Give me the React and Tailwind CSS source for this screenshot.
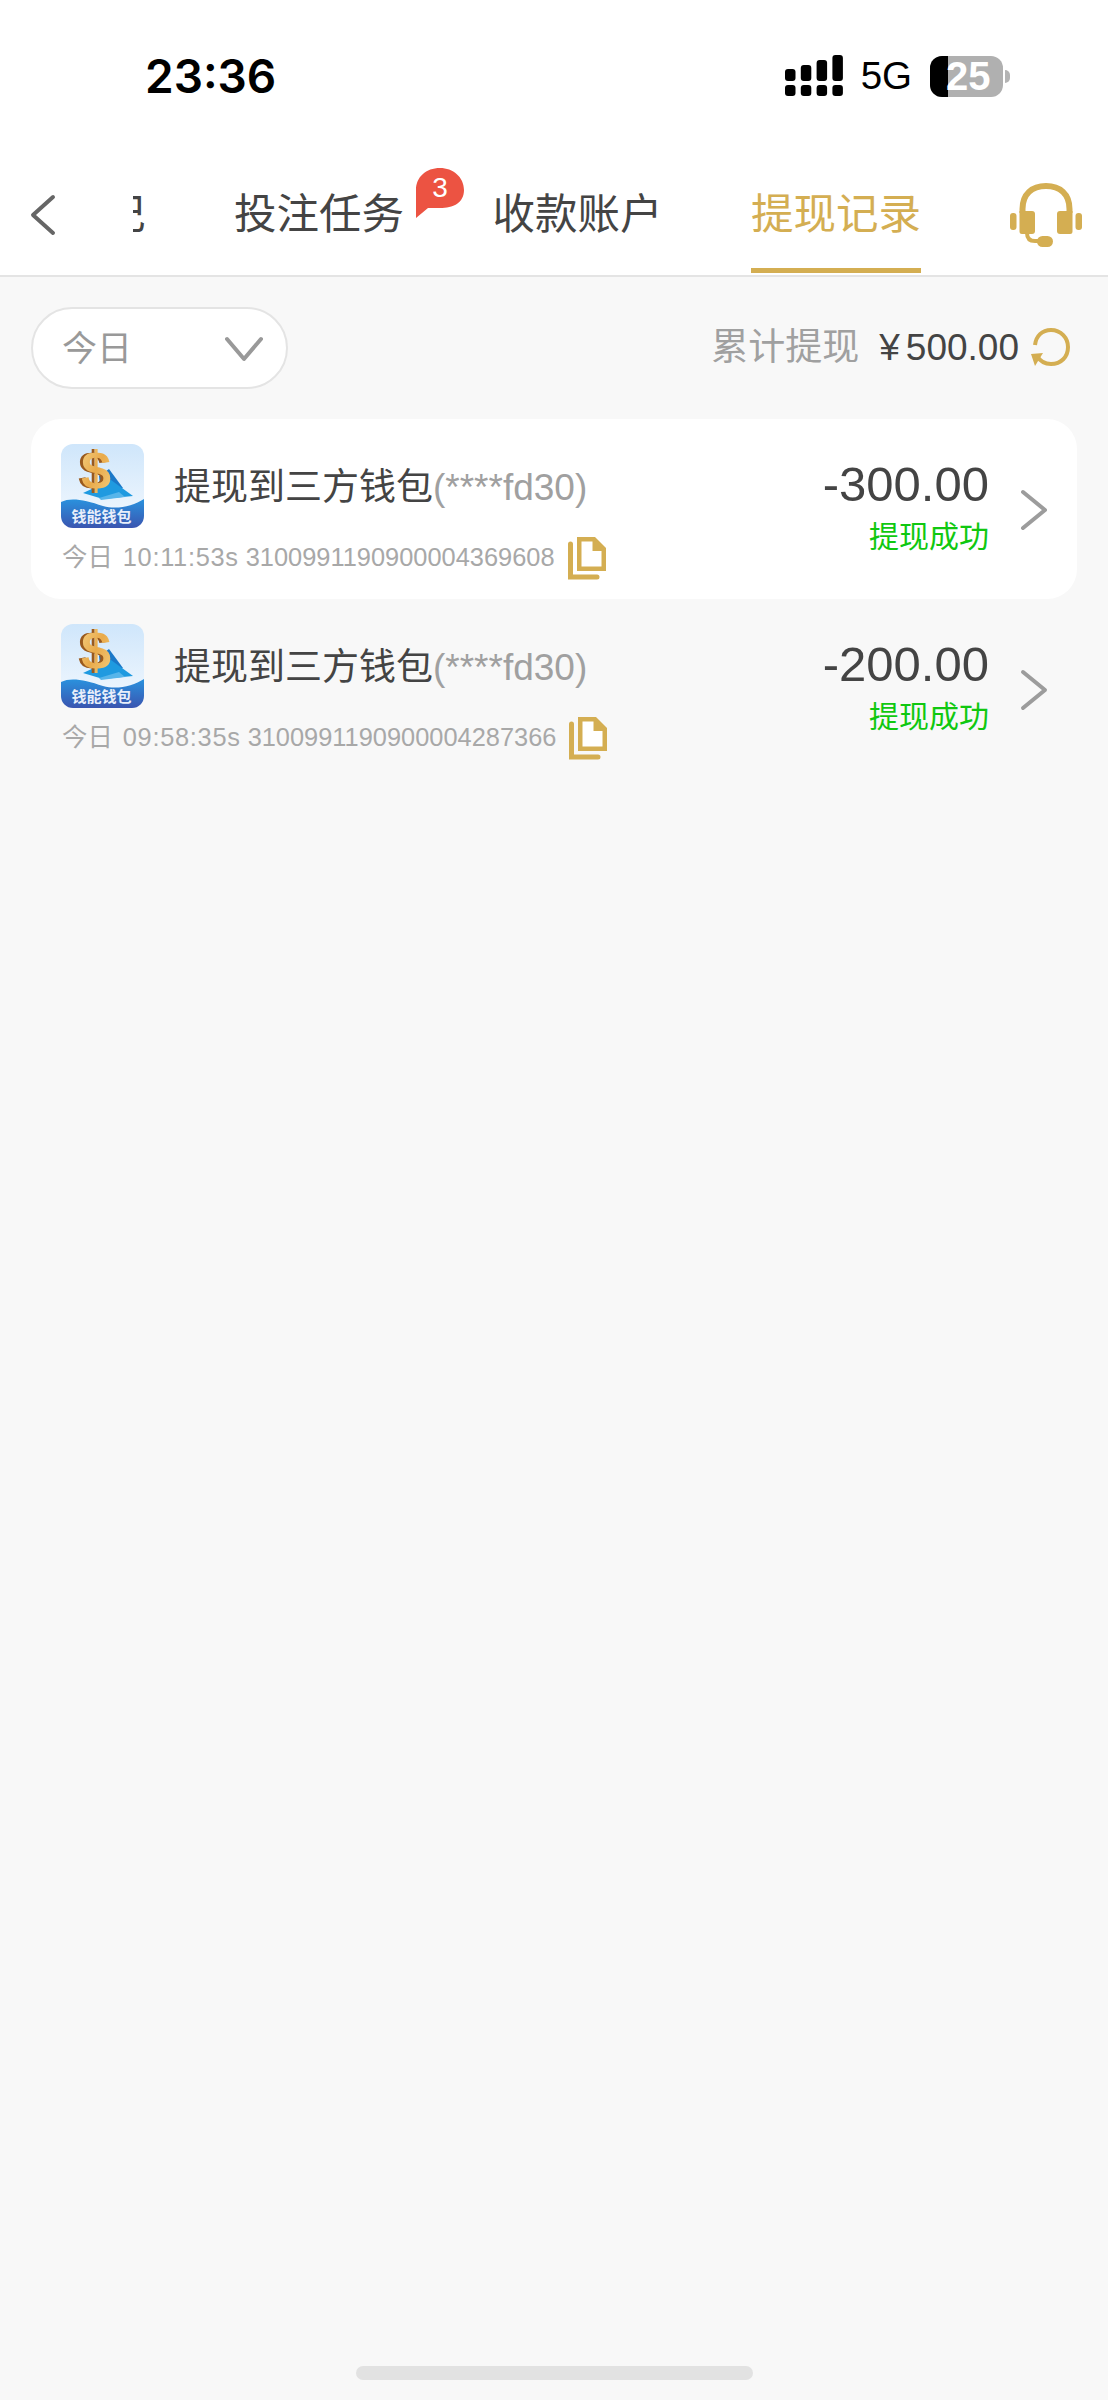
import React from 'react';

const records = [
  { time: '10:11:53s', no: '3100991190900004369608', amount: '-300.00', active: true },
  { time: '09:58:35s', no: '3100991190900004287366', amount: '-200.00', active: false },
];

function Signal() {
  const tops = [14, 10, 5, 0];
  return (
    <svg width="58" height="42" viewBox="0 0 58 42">
      {tops.map((t, i) => (
        <g key={i} fill="#000">
          <rect x={i * 15.8} y={t} width="10.5" height={26 - t} rx="3" />
          <rect x={i * 15.8} y="30" width="10.5" height="11" rx="3" />
        </g>
      ))}
    </svg>
  );
}

function Battery() {
  return (
    <div className="flex items-center gap-[2px]">
      <div className="relative flex h-[41px] w-[73px] overflow-hidden rounded-[12px] bg-[#b0b0b0]">
        <div className="h-full w-[18px] bg-black"></div>
        <span className="absolute left-[16px] top-0 text-[40px] leading-[41px] font-bold text-white">25</span>
      </div>
      <div className="h-[13px] w-[5px] rounded-r-full bg-[#b4b4b4]"></div>
    </div>
  );
}

function Headset() {
  return (
    <svg width="72" height="64" viewBox="0 0 72 64" fill="#d4ae52">
      <path d="M12.5 30V26C12.5 11 22 3 36 3S59.5 11 59.5 26V30" fill="none" stroke="#d4ae52" strokeWidth="6" />
      <path d="M9.5 28H22C24 28 25 29 25 31V48C25 50 24 51 22 51H12C10 51 9.5 50 9.5 48Z" />
      <path d="M62.5 28H50C48 28 47 29 47 31V48C47 50 48 51 50 51H60C62 51 62.5 50 62.5 48Z" />
      <rect x="0" y="30" width="6.5" height="17" rx="3" />
      <rect x="65.5" y="30" width="6.5" height="17" rx="3" />
      <path d="M17 50C17 56 20 58 25 58H32" fill="none" stroke="#d4ae52" strokeWidth="4" />
      <rect x="27" y="53" width="16" height="11" rx="5.5" />
    </svg>
  );
}

function Refresh() {
  return (
    <svg width="42" height="42" viewBox="0 0 42 42" fill="none">
      <path d="M5 18C6 9 12 3 21 3C31 3 38 11 38 20C38 30 31 37 21 37C15 37 10 34 7 29" stroke="#d4ae52" strokeWidth="4" />
      <path d="M1 27L13 26L5 39Z" fill="#d4ae52" />
    </svg>
  );
}

function Copy() {
  return (
    <svg width="40" height="44" viewBox="0 0 40 44" fill="none" className="shrink-0">
      <path d="M9 1H27L38 12V35H9Z" fill="#d4ae52" />
      <path d="M13.5 5.5H24.5V15H33.5V30.5H13.5Z" fill="#fff" />
      <path d="M2.5 8V41H29" stroke="#d4ae52" strokeWidth="5" strokeLinecap="round" />
    </svg>
  );
}

function WalletLogo({ id }) {
  return (
    <svg width="83" height="84" viewBox="0 0 83 84" className="shrink-0">
      <defs>
        <linearGradient id={`sky${id}`} x1="0" y1="0" x2="0" y2="1">
          <stop offset="0" stopColor="#cfe6fb" />
          <stop offset="1" stopColor="#f4f9fe" />
        </linearGradient>
        <linearGradient id={`sea${id}`} x1="0" y1="0" x2="0" y2="1">
          <stop offset="0" stopColor="#2a92de" />
          <stop offset="1" stopColor="#3a55b0" />
        </linearGradient>
        <linearGradient id={`gold${id}`} x1="0" y1="0" x2="1" y2="1">
          <stop offset="0" stopColor="#f6d488" />
          <stop offset="0.5" stopColor="#e9aa4a" />
          <stop offset="1" stopColor="#f5cf80" />
        </linearGradient>
        <clipPath id={`clip${id}`}>
          <rect width="83" height="84" rx="12" />
        </clipPath>
      </defs>
      <g clipPath={`url(#clip${id})`}>
        <rect width="83" height="84" fill={`url(#sky${id})`} />
        <path d="M38 32L48 25L62 44L40 50Z" fill="#1b78c8" />
        <path d="M22 49L50 36L72 52L42 55Z" fill="#1f9ae0" />
        <path d="M40 56L64 53L58 48L38 54Z" fill="#57b5ea" />
        <text x="32" y="45" textAnchor="middle" fontSize="54" fontWeight="700" fill="#9a5a1e" fontFamily="'Liberation Sans', sans-serif">$</text>
        <text x="35" y="45" textAnchor="middle" fontSize="54" fontWeight="700" fill={`url(#gold${id})`} fontFamily="'Liberation Sans', sans-serif">$</text>
        <path d="M0 58C10 53 24 56 42 62C56 66 72 62 83 55V84H0Z" fill={`url(#sea${id})`} />
        <text x="40.5" y="78" textAnchor="middle" fontSize="15" fontWeight="700" fill="#e8eefa" fontFamily="'Noto Sans CJK SC', sans-serif">钱能钱包</text>
      </g>
    </svg>
  );
}

function Chevron({ className, d, width, height, vb, stroke }) {
  return (
    <svg width={width} height={height} viewBox={vb} fill="none" className={className}>
      <path d={d} stroke={stroke} strokeWidth="4" strokeLinecap="round" strokeLinejoin="round" />
    </svg>
  );
}

function RecordRow({ record, id }) {
  return (
    <div className={`flex h-[180px] items-start rounded-[30px] pl-[30px] pr-[29px] pt-[25px] ${record.active ? 'bg-white' : ''}`}>
      <div className="min-w-0 flex-1">
        <div className="flex items-center">
          <WalletLogo id={id} />
          <div className="ml-[30px] mt-[2px] text-[37px] leading-none whitespace-nowrap text-[#444]">
            提现到三方钱包<span className="text-[#a0a0a0]">(****fd30)</span>
          </div>
        </div>
        <div className="ml-[1px] mt-[8px] flex items-center text-[25.4px] leading-none whitespace-nowrap text-[#a8a8a8]">
          <span>今日</span>
          <span className="ml-[10px] tracking-[0.7px]">{record.time}</span>
          <span className="ml-[7px]">{record.no}</span>
          <span className="ml-[13px]">
            <Copy />
          </span>
        </div>
      </div>
      <div className="mt-[12px] flex flex-col items-end">
        <div className="text-[49px] leading-[56px] text-[#444]">{record.amount}</div>
        <div className="mt-[7px] text-[30px] leading-[36px] text-[#10c810]">提现成功</div>
      </div>
      <Chevron className="ml-[31px] mt-[45px]" width="28" height="42" vb="0 0 28 42" d="M3 3L25 21L3 39" stroke="#9c9c9c" />
    </div>
  );
}

export default function App() {
  return (
    <div className="flex h-[2400px] w-[1108px] flex-col overflow-hidden bg-[#f8f8f8] font-['Liberation_Sans','Noto_Sans_CJK_SC',sans-serif]">
      {/* status bar */}
      <div className="flex h-[154px] items-center bg-white pb-[2px] pl-[145px]">
        <span className="font-['Inter',sans-serif] text-[46px] leading-none font-semibold text-black">23:36</span>
        <div className="ml-auto mr-[98px] flex items-center">
          <Signal />
          <span className="ml-[18px] text-[38.5px] leading-none text-black">5G</span>
          <div className="ml-[18px]">
            <Battery />
          </div>
        </div>
      </div>

      {/* tabs */}
      <div className="flex h-[123px] items-center border-b-2 border-[#e4e4e4] bg-white">
        <Chevron className="ml-[29px] shrink-0" width="28" height="42" vb="0 0 28 42" d="M24 3L4 21L24 39" stroke="#666" />
        <div className="ml-[76px] flex h-full w-[867px] gap-[88.5px] overflow-hidden text-[42.5px] whitespace-nowrap text-[#444]">
          <div className="ml-[-30px] flex items-center">记</div>
          <div className="relative flex items-center">
            投注任务
            <div className="absolute left-[182px] top-[14px] h-[50px] w-[48px]">
              <svg width="48" height="50" viewBox="0 0 48 50" className="absolute inset-0">
                <path d="M0 22C0 9 10 0 24 0C37 0 48 9 48 22C48 35 37 40 24 40H12L0 50Z" fill="#ec5342" />
              </svg>
              <span className="absolute left-0 top-[2px] w-full text-center text-[28px] leading-[36px] text-white">3</span>
            </div>
          </div>
          <div className="flex items-center">收款账户</div>
          <div className="relative flex items-center text-[#d4ae52]">
            提现记录
            <div className="absolute bottom-[2px] left-0 h-[5px] w-full bg-[#d4ae52]"></div>
          </div>
        </div>
        <div className="ml-[10px] shrink-0">
          <Headset />
        </div>
      </div>

      {/* filter */}
      <div className="mt-[30px] flex items-center px-[31px]">
        <div className="flex h-[82px] w-[257px] items-center justify-between rounded-full border-2 border-[#e4e4e4] bg-white pl-[29px] pr-[23px] pt-[2px] text-[35px] text-[#999]">
          今日
          <Chevron width="38" height="26" vb="0 0 38 26" d="M2 3L19 23L36 3" stroke="#999" />
        </div>
        <div className="ml-auto flex items-center text-[37px] whitespace-nowrap">
          <span className="text-[#a0a0a0]">累计提现</span>
          <span className="ml-[20px] mr-[6px] text-[#444]">¥</span>
          <span className="text-[#444]">500.00</span>
          <span className="ml-[11px] mr-[5px]">
            <Refresh />
          </span>
        </div>
      </div>

      {/* records */}
      <div className="mt-[30px] flex flex-col px-[31px]">
        {records.map((r, i) => (
          <RecordRow key={r.no} record={r} id={i} />
        ))}
      </div>

      {/* home indicator */}
      <div className="mx-auto mb-[20px] mt-auto h-[14px] w-[397px] rounded-full bg-[#e2e2e2]"></div>
    </div>
  );
}
